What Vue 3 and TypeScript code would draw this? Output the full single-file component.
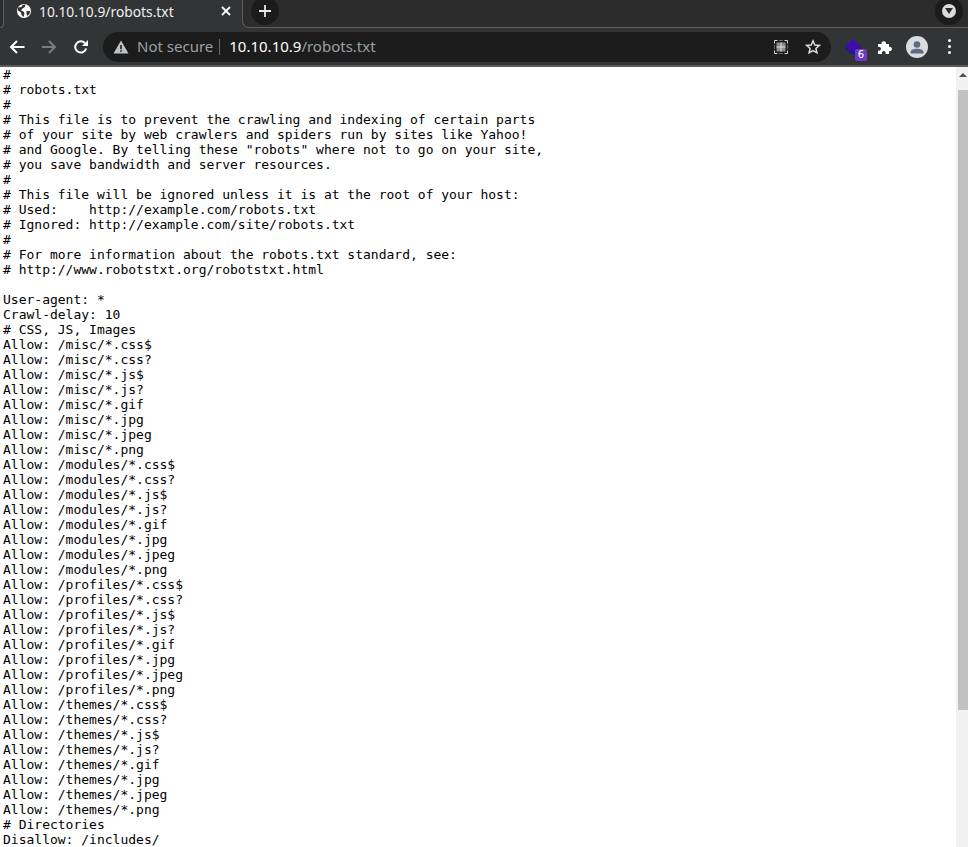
<script setup lang="ts">
const robots = `#
# robots.txt
#
# This file is to prevent the crawling and indexing of certain parts
# of your site by web crawlers and spiders run by sites like Yahoo!
# and Google. By telling these "robots" where not to go on your site,
# you save bandwidth and server resources.
#
# This file will be ignored unless it is at the root of your host:
# Used:    http://example.com/robots.txt
# Ignored: http://example.com/site/robots.txt
#
# For more information about the robots.txt standard, see:
# http://www.robotstxt.org/robotstxt.html

User-agent: *
Crawl-delay: 10
# CSS, JS, Images
Allow: /misc/*.css$
Allow: /misc/*.css?
Allow: /misc/*.js$
Allow: /misc/*.js?
Allow: /misc/*.gif
Allow: /misc/*.jpg
Allow: /misc/*.jpeg
Allow: /misc/*.png
Allow: /modules/*.css$
Allow: /modules/*.css?
Allow: /modules/*.js$
Allow: /modules/*.js?
Allow: /modules/*.gif
Allow: /modules/*.jpg
Allow: /modules/*.jpeg
Allow: /modules/*.png
Allow: /profiles/*.css$
Allow: /profiles/*.css?
Allow: /profiles/*.js$
Allow: /profiles/*.js?
Allow: /profiles/*.gif
Allow: /profiles/*.jpg
Allow: /profiles/*.jpeg
Allow: /profiles/*.png
Allow: /themes/*.css$
Allow: /themes/*.css?
Allow: /themes/*.js$
Allow: /themes/*.js?
Allow: /themes/*.gif
Allow: /themes/*.jpg
Allow: /themes/*.jpeg
Allow: /themes/*.png
# Directories
Disallow: /includes/`
</script>

<template>
  <div class="browser">
    <header class="tabstrip">
      <div class="corner-left"></div>
      <div class="tab">
        <svg class="favicon" viewBox="0 0 16 16" width="16" height="16">
          <circle cx="8" cy="8" r="7" fill="#fff" />
          <path d="M2 4.5 L5.5 4 L6.5 2 L9.5 1.5 L8.8 4 L6.5 5.5 L5 7.5 L7.5 8.5 L8.5 10.5 L7.5 14 L5.5 12 L5 9.5 L2 7.5 Z" fill="#333" />
          <path d="M10.5 8 L14 8 L13.5 11 L11 13 L10.5 10.5 Z" fill="#333" />
        </svg>
        <span class="tab-title">10.10.10.9/robots.txt</span>
        <svg class="tab-close" viewBox="0 0 10 10" width="10" height="10">
          <path d="M1 1 L9 9 M9 1 L1 9" stroke="#fff" stroke-width="1.8" />
        </svg>
      </div>
      <div class="strip-fill">
        <div class="newtab">
          <svg viewBox="0 0 14 14" width="14" height="14">
            <path d="M7 1 V13 M1 7 H13" stroke="#e8e8e8" stroke-width="1.8" />
          </svg>
        </div>
        <div class="tabsearch">
          <span class="tabsearch-disc">
            <svg viewBox="0 0 8 6" width="8" height="6"><path d="M0 0 H8 L4 6 Z" fill="#2a2a2a" /></svg>
          </span>
        </div>
      </div>
    </header>

    <nav class="toolbar">
      <svg class="nav-icon first" viewBox="0 0 16 16" width="16" height="16">
        <path d="M15.5 8 H2 M8 2 L2 8 L8 14" fill="none" stroke="#fff" stroke-width="2" />
      </svg>
      <svg class="nav-icon" viewBox="0 0 16 16" width="16" height="16">
        <path d="M1 8 H14 M8 2 L14 8 L8 14" fill="none" stroke="#7b7b7b" stroke-width="2" />
      </svg>
      <svg class="nav-icon" viewBox="0 0 16 16" width="16" height="16">
        <path d="M13.2 9.5 A5.6 5.6 0 1 1 12 4.2" fill="none" stroke="#fff" stroke-width="2" />
        <path d="M15 1 V7 H9 Z" fill="#fff" />
      </svg>
      <div class="omnibox">
        <svg class="warn" viewBox="0 0 16 14" width="16" height="14">
          <path d="M8 0.5 L15.5 13.5 H0.5 Z" fill="#bdc1c6" />
          <path d="M7.2 5 H8.8 V9.2 H7.2 Z M7.2 10.2 H8.8 V11.8 H7.2 Z" fill="#1c1c1c" />
        </svg>
        <span class="not-secure">Not secure</span>
        <span class="divider"></span>
        <span class="url"><span class="host">10.10.10.9</span>/robots.txt</span>
        <svg class="qr" viewBox="0 0 14 14" width="14" height="14">
          <path d="M0.5 3.5 V0.5 H3.5 M10.5 0.5 H13.5 V3.5 M13.5 10.5 V13.5 H10.5 M3.5 13.5 H0.5 V10.5" fill="none" stroke="#d0d0d0" stroke-width="1" />
          <path d="M5 0.5 H9 M5 13.5 H9 M0.5 5 V9 M13.5 5 V9" fill="none" stroke="#6a6a6a" stroke-width="1" />
          <rect x="2.5" y="2.5" width="9" height="9" fill="#8c8c8c" />
          <path d="M7 2.5 V11.5 M2.5 7 H11.5" fill="none" stroke="#e0e0e0" stroke-width="1" />
        </svg>
        <svg class="star" viewBox="0 0 16 16" width="16" height="16">
          <path d="M8 1.8 L9.8 6 L14.3 6.4 L10.9 9.4 L11.9 13.8 L8 11.5 L4.1 13.8 L5.1 9.4 L1.7 6.4 L6.2 6 Z" fill="none" stroke="#dcdcdc" stroke-width="1.5" />
        </svg>
      </div>
      <div class="ext">
        <svg viewBox="0 0 16 16" width="16" height="16">
          <path d="M0 8 L8 13 L16 8 V10 L8 16 L0 10 Z" fill="#231a8f" />
          <path d="M8 0 L16 7 L8 13 L0 7 Z" fill="#3f0cae" />
        </svg>
        <span class="badge">6</span>
      </div>
      <svg class="puzzle" viewBox="0 0 16 16" width="16" height="16">
        <path d="M1 5 H4.5 A2.3 2.3 0 1 1 9 5 H12 V7.8 A2.3 2.3 0 1 1 12 12.2 V15 H8.5 A2 2 0 1 0 5 15 H1 V11.5 A2 2 0 1 0 1 8 Z" fill="#fff" />
      </svg>
      <svg class="avatar" viewBox="0 0 22 22" width="22" height="22">
        <circle cx="11" cy="11" r="11" fill="#dadce0" />
        <circle cx="11" cy="8.5" r="3.3" fill="#5f6b80" />
        <path d="M4.5 16.5 C4.5 13.5 8 12.8 11 12.8 C14 12.8 17.5 13.5 17.5 16.5 V17.5 H4.5 Z" fill="#5f6b80" />
      </svg>
      <div class="kebab"><i></i><i></i><i></i></div>
    </nav>

    <main class="viewport">
      <pre class="doc">{{ robots }}</pre>
      <aside class="scrollbar">
        <div class="arrow"></div>
        <div class="thumb"></div>
      </aside>
    </main>
  </div>
</template>

<style>
html, body { margin: 0; background: #fff; }
</style>

<style scoped>
.browser {
  width: 968px;
  height: 847px;
  overflow: hidden;
  display: flex;
  flex-direction: column;
  font-family: "Noto Sans", "Liberation Sans", sans-serif;
}
.tabstrip {
  height: 28px;
  background: #333435;
  display: flex;
  flex: none;
}
.corner-left {
  width: 4px;
  height: 28px;
  box-sizing: border-box;
  background: #2c2c2c;
  border-right: 1px solid #5e5e5e;
  border-bottom: 1px solid #5e5e5e;
  border-bottom-right-radius: 6px;
  flex: none;
}
.tab {
  width: 238px;
  height: 28px;
  display: flex;
  align-items: center;
  flex: none;
  color: #fff;
}
.favicon { margin-left: 12px; margin-top: -6px; flex: none; }
.tab-title {
  margin-left: 7px;
  margin-top: -6px;
  font-size: 13.8px;
  color: #f1f1f1;
  flex: 1;
  white-space: nowrap;
}
.tab-close { margin-right: 11px; margin-top: -6px; flex: none; }
.strip-fill {
  flex: 1;
  height: 28px;
  box-sizing: border-box;
  background: #2c2c2c;
  border-left: 1px solid #5e5e5e;
  border-bottom: 1px solid #5e5e5e;
  border-bottom-left-radius: 7px;
  display: flex;
  justify-content: space-between;
}
.newtab {
  width: 28px;
  height: 28px;
  margin: -3px 0 0 8px;
  border-radius: 50%;
  background: #1b1b1b;
  display: flex;
  align-items: center;
  justify-content: center;
  flex: none;
}
.tabsearch {
  width: 28px;
  height: 28px;
  margin: -3px 5px 0 0;
  border-radius: 50%;
  background: #1b1b1b;
  display: flex;
  align-items: center;
  justify-content: center;
}
.tabsearch-disc {
  width: 14px;
  height: 14px;
  border-radius: 50%;
  background: #dadada;
  display: flex;
  align-items: center;
  justify-content: center;
}
.toolbar {
  height: 37px;
  box-sizing: content-box;
  background: #333435;
  border-bottom: 2px solid #5a5a5a;
  display: flex;
  align-items: center;
  flex: none;
}
.nav-icon { margin-left: 16px; flex: none; }
.nav-icon.first { margin-left: 9px; }
.omnibox {
  width: 728px;
  height: 30px;
  margin-left: 14px;
  border-radius: 15px;
  background: #1c1c1c;
  display: flex;
  align-items: center;
  flex: none;
}
.warn { margin-left: 10px; flex: none; }
.not-secure { margin-left: 8px; margin-top: -2px; font-size: 15px; color: #9aa0a6; white-space: nowrap; }
.divider { width: 1px; height: 16px; margin: 0 9px 0 6px; background: #6b6b6b; }
.url { margin-top: -2px; font-size: 15px; color: #9aa0a6; flex: 1; white-space: nowrap; }
.host { color: #fff; }
.qr { margin-right: 17px; flex: none; }
.star { margin-right: 10px; flex: none; }
.ext { position: relative; width: 24px; height: 24px; margin-left: 14px; flex: none; }
.ext svg { position: absolute; left: 0; top: 4px; }
.badge {
  position: absolute;
  left: 10px;
  top: 14px;
  width: 12px;
  height: 12px;
  border-radius: 2px;
  background: #6a3cc4;
  color: #fff;
  font-family: "DejaVu Sans", sans-serif;
  font-size: 10px;
  line-height: 12px;
  text-align: center;
}
.puzzle { margin-left: 8px; flex: none; }
.avatar { margin-left: 13px; flex: none; }
.kebab { margin-left: 20px; display: flex; flex-direction: column; gap: 3px; }
.kebab i { width: 3px; height: 3px; border-radius: 50%; background: #fff; display: block; }
.viewport { flex: 1; display: flex; min-height: 0; background: #fff; }
.doc {
  flex: 1;
  margin: 0;
  padding-left: 3px;
  font-family: "DejaVu Sans Mono", monospace;
  font-size: 13px;
  line-height: 15px;
  color: #000;
  overflow: hidden;
}
.scrollbar { width: 12px; flex: none; background: #f1f1f1; display: flex; flex-direction: column; align-items: flex-end; }
.arrow {
  width: 0;
  height: 0;
  margin: 6px 1px 13px 0;
  border-left: 4px solid transparent;
  border-right: 4px solid transparent;
  border-bottom: 4px solid #505050;
}
.thumb { width: 10px; height: 620px; background: #c1c1c1; }
</style>
